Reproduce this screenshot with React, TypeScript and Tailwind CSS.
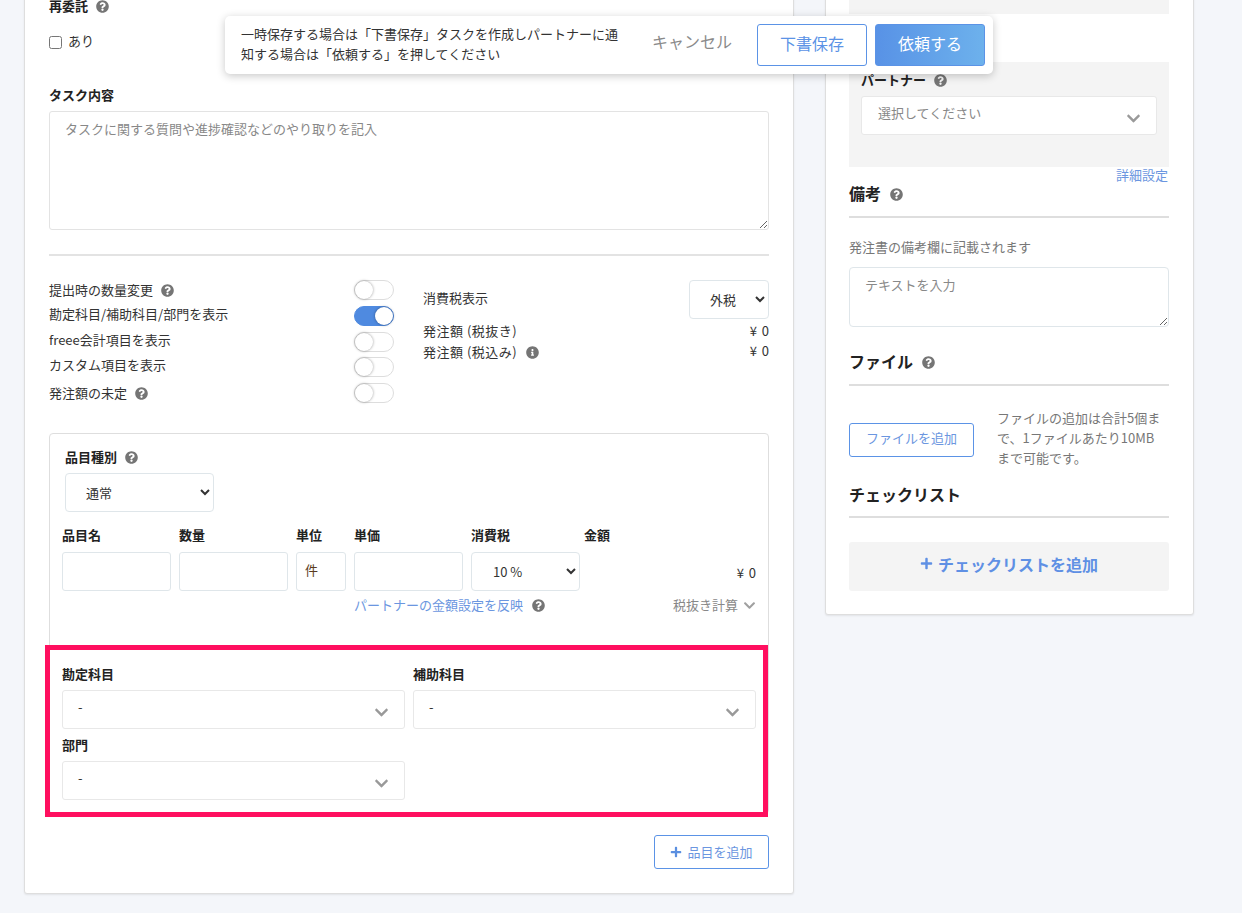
import { FaChevronDown, FaInfoCircle, FaPlus, FaQuestionCircle } from 'react-icons/fa';
import clsx from 'clsx';

function Help({ className }: { className?: string }) {
  return <FaQuestionCircle className={clsx('inline-block h-[13px] w-[13px] text-[#757575]', className)} />;
}

function Label({ children, help, className }: { children: React.ReactNode; help?: boolean; className?: string }) {
  return (
    <div className={clsx('flex h-5 items-center text-[13px] font-bold leading-5 text-[#222]', className)}>
      {children}
      {help && <Help className="ml-2" />}
    </div>
  );
}

function Heading({ children, help, className }: { children: React.ReactNode; help?: boolean; className?: string }) {
  return (
    <>
      <div className={clsx('flex h-5 items-center text-base font-bold leading-5 text-[#222]', className)}>
        <span className="-mt-[2px]">{children}</span>
        {help && <Help className="ml-[9px]" />}
      </div>
      <div className="mt-3 h-0.5 bg-[#dedede]" />
    </>
  );
}

function Toggle({ on }: { on?: boolean }) {
  return (
    <span
      className={clsx(
        'relative block h-5 w-10 shrink-0 rounded-full border',
        on ? 'border-[#4f8ae0] bg-[#4f8ae0]' : 'border-[#dddddd] bg-white',
      )}
    >
      <span
        className={clsx(
          'absolute top-0 h-[18px] w-[18px] rounded-full bg-white shadow-[0_0_3px_rgba(0,0,0,0.4)]',
          on ? 'right-0' : 'left-0',
        )}
      />
    </span>
  );
}

function FakeSelect({ value, placeholder, className }: { value: string; placeholder?: boolean; className?: string }) {
  return (
    <div
      className={clsx(
        'flex h-[39px] items-start justify-between rounded-[3px] border border-[#e8e8e8] bg-white pl-[15px] pr-[15px] text-[13px] leading-5',
        className,
      )}
    >
      <span className={clsx('mt-[6px]', placeholder ? 'ml-px text-[#888]' : 'text-[#333]')}>{value}</span>
      <FaChevronDown className="mt-[14px] h-[15px] w-[15px] text-[#999]" />
    </div>
  );
}

function NativeSelect({ options, className }: { options: string[]; className?: string }) {
  return (
    <select className={clsx('h-[39px] rounded-[4px] border border-[#dfe6ea] bg-white text-[13px] text-[#333]', className)}>
      {options.map((o) => (
        <option key={o}>{o}</option>
      ))}
    </select>
  );
}

const inputClass = 'h-[39px] rounded-[3px] border border-[#dfe6ea] bg-white';

const toggles = [
  { label: '提出時の数量変更', help: true, h: 'h-[26px]', lift: '' },
  { label: '勘定科目/補助科目/部門を表示', on: true, h: 'h-[26px]', lift: '-mt-[2px]' },
  { label: 'freee会計項目を表示', h: 'h-[25px]', lift: '-mt-[2px]' },
  { label: 'カスタム項目を表示', h: 'h-[26px]', lift: '-mt-[2px]' },
  { label: '発注額の未定', help: true, h: 'h-[21px]', lift: '' },
];

function LeftCard() {
  return (
    <div className="flex h-[914px] w-[770px] shrink-0 flex-col rounded-[3px] border border-[#dedede] bg-white px-6 pt-[15px] shadow-[0_1px_2px_rgba(0,0,0,0.08)]">
      <Label help>再委託</Label>
      <label className="mt-4 flex h-5 items-center text-[13px] leading-5 text-[#333]">
        <input type="checkbox" className="h-[13px] w-[13px]" />
        <span className="ml-[6px] -mt-[3px]">あり</span>
      </label>

      <Label className="mt-[33px]">タスク内容</Label>
      <textarea
        placeholder="タスクに関する質問や進捗確認などのやり取りを記入"
        className="mt-[6px] h-[119px] w-full rounded-[3px] border border-[#e3e3e3] bg-white px-[15px] py-[7px] text-[13px] leading-5 placeholder:text-[#888]"
      />
      <div className="mt-6 h-0.5 bg-[#e3e3e3]" />

      <div className="mt-6 flex">
        <div className="w-[345px] shrink-0">
          {toggles.map((t) => (
            <div key={t.label} className={clsx('flex items-start justify-between text-[13px] leading-5 text-[#333]', t.h)}>
              <span className={clsx('flex h-5 items-center', t.lift)}>
                {t.label}
                {t.help && <Help className="ml-2" />}
              </span>
              <Toggle on={t.on} />
            </div>
          ))}
        </div>
        <div className="ml-[29px] flex-1 text-[13px] leading-5 text-[#333]">
          <div className="flex items-center justify-between">
            <span className="mb-1">消費税表示</span>
            <NativeSelect options={['外税']} className="w-20 pl-4" />
          </div>
          <div className="mt-[2px] flex justify-between">
            <span className="tracking-[0.5px]">発注額 (税抜き)</span>
            <span className="-mr-px tracking-[1px]">¥ 0</span>
          </div>
          <div className="mt-px flex justify-between">
            <span className="flex items-center tracking-[0.5px]">
              発注額 (税込み)
              <FaInfoCircle className="ml-[9px] h-[13px] w-[13px] text-[#757575]" />
            </span>
            <span className="-mr-px -mt-px tracking-[1px]">¥ 0</span>
          </div>
        </div>
      </div>

      <div className="relative mt-[29px] rounded-[4px] border border-[#dedede] px-3 pb-[13px] pt-[13px]">
        <Label help className="ml-[3px]">品目種別</Label>
        <NativeSelect options={['通常']} className="ml-[3px] mt-[6px] w-[149px] pl-4" />

        <div className="mt-[14px] flex -translate-y-px gap-2 text-[13px] font-bold leading-5 text-[#222]">
          <span className="w-[109px]">品目名</span>
          <span className="w-[109px]">数量</span>
          <span className="w-[50px]">単位</span>
          <span className="w-[109px]">単価</span>
          <span className="w-[109px]">消費税</span>
          <span className="ml-[-4px]">金額</span>
        </div>
        <div className="mt-[6px] flex gap-2">
          <input className={clsx(inputClass, 'w-[109px]')} />
          <input className={clsx(inputClass, 'w-[109px]')} />
          <input defaultValue="件" className={clsx(inputClass, 'w-[50px] px-2 pb-[5px] text-[13px] text-[#5a3a20]')} />
          <input className={clsx(inputClass, 'w-[109px]')} />
          <NativeSelect options={['10 %']} className="w-[109px] pl-[17px]" />
          <span className="-mr-px mt-[11px] flex-1 text-right text-[13px] leading-5 tracking-[1px] text-[#333]">¥ 0</span>
        </div>
        <div className="mt-1 flex h-5 items-center text-[13px] leading-5">
          <span className="ml-[292px] text-[#6b96e0]">パートナーの金額設定を反映</span>
          <Help className="ml-[9px]" />
          <span className="ml-auto text-[#888]">税抜き計算</span>
          <FaChevronDown className="ml-[5px] h-[13px] w-[13px] text-[#a0a0a0]" />
        </div>

        <div className="mt-[50px] grid grid-cols-2 gap-x-2">
          <div>
            <Label className="-translate-y-px">勘定科目</Label>
            <FakeSelect value="-" className="mt-[5px]" />
          </div>
          <div>
            <Label className="-translate-y-px">補助科目</Label>
            <FakeSelect value="-" className="mt-[5px]" />
          </div>
          <div className="mt-[7px]">
            <Label className="-translate-y-px">部門</Label>
            <FakeSelect value="-" className="mt-[5px]" />
          </div>
        </div>

        {/* annotation drawn over the section */}
        <div className="pointer-events-none absolute bottom-[-4px] left-[-5px] right-0 top-[211px] border-[5px] border-[#ff0f5f]" />
      </div>

      <button
        type="button"
        className="mt-[21px] flex h-[34px] w-[115px] items-center justify-center self-end rounded-[3px] border border-[#5b93e6] bg-white text-[13px] text-[#6b96e0]"
      >
        <FaPlus className="mr-[5px] h-3 w-3 text-[#5b8fe0]" />
        品目を追加
      </button>
    </div>
  );
}

function RightCard() {
  return (
    <div className="ml-[31px] flex h-[635px] w-[369px] shrink-0 flex-col rounded-[3px] border border-[#dedede] bg-white pl-[23px] pr-6 pt-[9px] shadow-[0_1px_2px_rgba(0,0,0,0.08)]">
      <div className="h-6 bg-[#f4f4f4]" />
      <div className="mt-12 h-[105px] bg-[#f4f4f4] px-3 pt-2">
        <Label help>パートナー</Label>
        <FakeSelect value="選択してください" placeholder className="mt-[6px]" />
      </div>
      <div className="h-[17px] pr-px text-right text-[13px] leading-[15px] text-[#6b96e0]">詳細設定</div>
      <Heading help>備考</Heading>
      <p className="mt-[19px] h-5 text-[13px] leading-5 text-[#777]">発注書の備考欄に記載されます</p>
      <textarea
        placeholder="テキストを入力"
        className="mt-[10px] h-[60px] rounded-[4px] border border-[#dfe6ea] bg-white px-[15px] py-[7px] text-[13px] leading-5 placeholder:text-[#888]"
      />
      <Heading help className="mt-[25px]">ファイル</Heading>
      <div className="mt-[22px] flex items-center">
        <button
          type="button"
          className="mt-1 h-[34px] w-[125px] shrink-0 rounded-[3px] border border-[#5b93e6] bg-white pb-1 text-[13px] text-[#6b96e0]"
        >
          ファイルを追加
        </button>
        <p className="ml-[23px] text-[13px] leading-5 text-[#777]">
          ファイルの追加は合計5個ま
          <br />
          で、1ファイルあたり10MB
          <br />
          まで可能です。
        </p>
      </div>
      <Heading className="mt-4 translate-y-px">チェックリスト</Heading>
      <button
        type="button"
        className="mt-6 flex h-[49px] items-center justify-center rounded-[3px] bg-[#f4f4f4] pb-[6px] text-base font-bold text-[#5f90e4]"
      >
        <FaPlus className="mr-[5px] h-[13px] w-[13px]" />
        チェックリストを追加
      </button>
    </div>
  );
}

export default function App() {
  return (
    <div className="relative h-[913px] w-[1242px] overflow-hidden bg-[#f4f6fa] font-['Noto_Sans_CJK_JP','Noto_Sans',sans-serif]">
      <div className="-mt-5 flex pl-6">
        <LeftCard />
        <RightCard />
      </div>
      <div className="absolute left-[225px] top-4 flex h-[58px] w-[768px] items-center rounded-[5px] bg-white pl-4 pr-2 shadow-[0_2px_8px_rgba(0,0,0,0.22)]">
        <p className="mb-[3px] w-[380px] text-[13px] leading-5 text-[#333]">
          一時保存する場合は「下書保存」タスクを作成しパートナーに通知する場合は「依頼する」を押してください
        </p>
        <button type="button" className="ml-[31px] pb-2 text-base text-[#8a8a8a]">
          キャンセル
        </button>
        <button
          type="button"
          className="ml-[25px] h-[42px] w-[110px] rounded-[3px] border border-[#5b93e6] bg-white pb-1 text-base text-[#5b93e6]"
        >
          下書保存
        </button>
        <button
          type="button"
          className="ml-2 h-[42px] w-[110px] rounded-[3px] border border-[#5b93e6] bg-gradient-to-r from-[#5892e6] to-[#6db1ec] pb-1 text-base text-white"
        >
          依頼する
        </button>
      </div>
    </div>
  );
}
